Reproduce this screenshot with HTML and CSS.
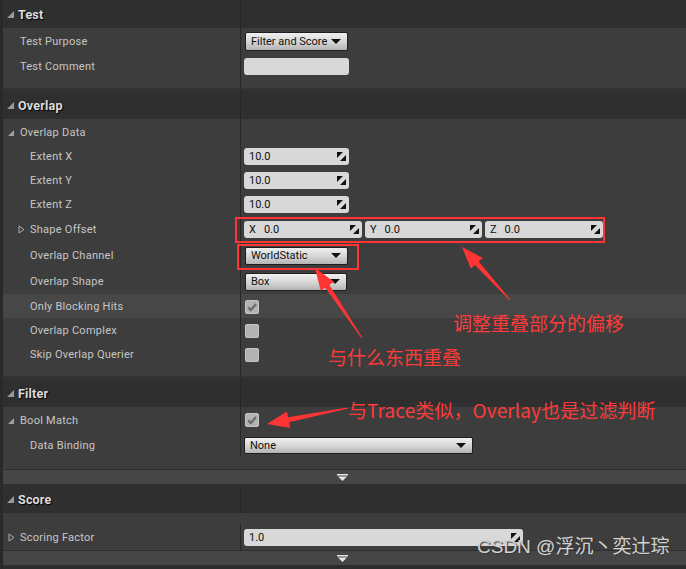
FILE: index.html
```html
<!DOCTYPE html>
<html>
<head>
<meta charset="utf-8">
<link rel="stylesheet" href="styles.css">
</head>
<body>
<div class="panel">
  <!-- TEST -->
  <div class="header"><div class="hname"><svg class="tri" width="7" height="7" viewBox="0 0 7 7"><polygon points="0,7 7,7 7,0"/></svg>Test</div><div class="hval"></div></div>
  <div class="rows">
    <div class="row h25"><div class="name l1">Test Purpose</div><div class="value"><div class="combo w103">Filter and Score<span class="arr"></span></div></div></div>
    <div class="row h25"><div class="name l1">Test Comment</div><div class="value"><div class="field w105"></div></div></div>
    <div class="row h10"><div class="name"></div><div class="value"></div></div>
  </div>
  <div class="sep"></div>

  <!-- OVERLAP -->
  <div class="header"><div class="hname"><svg class="tri" width="7" height="7" viewBox="0 0 7 7"><polygon points="0,7 7,7 7,0"/></svg>Overlap</div><div class="hval"></div></div>
  <div class="rows">
    <div class="row h25"><div class="name l0"><svg class="tri small" width="6" height="6" viewBox="0 0 6 6"><polygon points="0,6 6,6 6,0"/></svg>Overlap Data</div><div class="value"></div></div>
    <div class="row"><div class="name l2">Extent X</div><div class="value"><div class="field num w105"><span>10.0</span><svg class="sp" width="9" height="9" viewBox="0 0 9 9"><polygon points="0,0 6,0 0,6"/><polygon points="9,3 9,9 3,9"/></svg></div></div></div>
    <div class="row"><div class="name l2">Extent Y</div><div class="value"><div class="field num w105"><span>10.0</span><svg class="sp" width="9" height="9" viewBox="0 0 9 9"><polygon points="0,0 6,0 0,6"/><polygon points="9,3 9,9 3,9"/></svg></div></div></div>
    <div class="row"><div class="name l2">Extent Z</div><div class="value"><div class="field num w105"><span>10.0</span><svg class="sp" width="9" height="9" viewBox="0 0 9 9"><polygon points="0,0 6,0 0,6"/><polygon points="9,3 9,9 3,9"/></svg></div></div></div>
    <div class="row h26"><div class="name l1b"><svg class="otri" width="7" height="9" viewBox="0 0 7 9"><polygon points="1,1 6,4.5 1,8" /></svg>Shape Offset</div><div class="value vec">
      <div class="field num w118"><span><b class="ax">X</b>0.0</span><svg class="sp" width="9" height="9" viewBox="0 0 9 9"><polygon points="0,0 6,0 0,6"/><polygon points="9,3 9,9 3,9"/></svg></div>
      <div class="field num w117"><span><b class="ax">Y</b>0.0</span><svg class="sp" width="9" height="9" viewBox="0 0 9 9"><polygon points="0,0 6,0 0,6"/><polygon points="9,3 9,9 3,9"/></svg></div>
      <div class="field num w118"><span><b class="ax">Z</b>0.0</span><svg class="sp" width="9" height="9" viewBox="0 0 9 9"><polygon points="0,0 6,0 0,6"/><polygon points="9,3 9,9 3,9"/></svg></div>
    </div></div>
    <div class="row h26"><div class="name l2">Overlap Channel</div><div class="value"><div class="combo w103 h18">WorldStatic<span class="arr"></span></div></div></div>
    <div class="row h26"><div class="name l2">Overlap Shape</div><div class="value"><div class="combo w102 h18">Box<span class="arr"></span></div></div></div>
    <div class="row hl"><div class="name l2">Only Blocking Hits</div><div class="value"><div class="check"><svg width="14" height="14" viewBox="0 0 14 14"><path d="M3.2 7.4 L5.8 10 L11 4" fill="none" stroke="#6c6c6c" stroke-width="2.4"/></svg></div></div></div>
    <div class="row"><div class="name l2">Overlap Complex</div><div class="value"><div class="check"></div></div></div>
    <div class="row"><div class="name l2">Skip Overlap Querier</div><div class="value"><div class="check"></div></div></div>
    <div class="row h10"><div class="name"></div><div class="value"></div></div>
  </div>
  <div class="sep"></div>

  <!-- FILTER -->
  <div class="header"><div class="hname"><svg class="tri" width="7" height="7" viewBox="0 0 7 7"><polygon points="0,7 7,7 7,0"/></svg>Filter</div><div class="hval"></div></div>
  <div class="rows">
    <div class="row h25"><div class="name l0"><svg class="tri small" width="6" height="6" viewBox="0 0 6 6"><polygon points="0,6 6,6 6,0"/></svg>Bool Match</div><div class="value"><div class="check"><svg width="14" height="14" viewBox="0 0 14 14"><path d="M3.2 7.4 L5.8 10 L11 4" fill="none" stroke="#6c6c6c" stroke-width="2.4"/></svg></div></div></div>
    <div class="row h25"><div class="name l2">Data Binding</div><div class="value"><div class="combo w229 h17">None<span class="arr"></span></div></div></div>
    <div class="pad12"></div>
  </div>
  <div class="expander"><svg width="11" height="7" viewBox="0 0 11 7"><rect x="0" y="0" width="11" height="1.5"/><polygon points="1,2.5 10,2.5 5.5,7"/></svg></div>

  <!-- SCORE -->
  <div class="header"><div class="hname"><svg class="tri" width="7" height="7" viewBox="0 0 7 7"><polygon points="0,7 7,7 7,0"/></svg>Score</div><div class="hval"></div></div>
  <div class="rows">
    <div class="pad11"></div>
    <div class="row h26"><div class="name l0b"><svg class="otri" width="7" height="9" viewBox="0 0 7 9"><polygon points="1,1 6,4.5 1,8" /></svg>Scoring Factor</div><div class="value"><div class="field num w279"><span>1.0</span><svg class="sp" width="9" height="9" viewBox="0 0 9 9"><polygon points="0,0 6,0 0,6"/><polygon points="9,3 9,9 3,9"/></svg></div></div></div>
  </div>
  <div class="expander"><svg width="11" height="7" viewBox="0 0 11 7"><rect x="0" y="0" width="11" height="1.5"/><polygon points="1,2.5 10,2.5 5.5,7"/></svg></div>
  <div class="bottom"></div>
</div>

<!-- annotations overlay -->
<div class="box box1"></div>
<div class="box box2"></div>
<svg class="arrows" width="686" height="569" viewBox="0 0 686 569">
  <polygon points="510.4,299.7 478.7,261.6 482.7,257.9 462,247 470.9,268.7 474.9,265.0 509.6,300.3"/>
  <polygon points="362.4,337.7 329.4,284.9 333.9,281.8 315,268 320.7,290.8 325.2,287.7 361.6,338.3"/>
  <polygon points="348.2,408.6 289.1,422.2 290.2,428 267,424 287.0,411.5 288.1,417.3 347.8,407.4"/>
</svg>
<div class="note note1">调整重叠部分的偏移</div>
<div class="note note2">与什么东西重叠</div>
<div class="note note3">与Trace类似，Overlay也是过滤判断</div>
<div class="watermark">CSDN @浮沉丶奕辻琮</div>
</body>
</html>
```

FILE: styles.css
```css
html, body {
  margin: 0;
  padding: 0;
  width: 686px;
  height: 569px;
  overflow: hidden;
  background: #2c2c2c;
}
body {
  position: relative;
  font-family: Roboto, "Noto Sans", sans-serif;
}
.panel {
  display: flex;
  flex-direction: column;
  border-left: 3px solid #2a2a2a;
  height: 569px;
  box-sizing: border-box;
  background: #3d3d3d;
}
.header {
  display: grid;
  grid-template-columns: 238px 1fr;
  height: 28px;
  background: #2f2f2f;
  flex: none;
}
.hname {
  border-right: 1px solid #252525;
  display: flex;
  align-items: center;
  padding-left: 4px;
  font-size: 12.5px;
  font-weight: bold;
  color: #dcdcdc;
  text-shadow: 1px 1px 1px #000;
  letter-spacing: 0.2px;
}
.tri {
  fill: #9a9a9a;
  margin-right: 4px;
  margin-top: 1px;
}
.tri.small {
  fill: #a0a0a0;
  margin-right: 6px;
}
.otri {
  fill: none;
  stroke: #b0b0b0;
  stroke-width: 1;
  margin-right: 5px;
}
.rows {
  display: flex;
  flex-direction: column;
  background: #3d3d3d;
}
.row {
  display: grid;
  grid-template-columns: 238px 1fr;
  height: 24px;
}
.row.h25 { height: 25px; }
.row.h26 { height: 26px; }
.row.h10 { height: 10px; }
.row.hl { background: #474747; }
.name {
  border-right: 1px solid #262626;
  display: flex;
  align-items: center;
  padding-top: 1px;
  box-sizing: border-box;
  font-size: 11px;
  color: #c6c6c6;
  letter-spacing: 0.25px;
  white-space: nowrap;
}
.name.l0 { padding-left: 5px; }
.name.l0b { padding-left: 5px; }
.name.l1 { padding-left: 17px; }
.name.l1b { padding-left: 15px; }
.name.l2 { padding-left: 27px; }
.value {
  display: flex;
  align-items: center;
  padding-left: 3px;
  padding-top: 1px;
  box-sizing: border-box;
}
.value.vec { gap: 3px; }
.sep {
  height: 3px;
  background: #333333;
  flex: none;
}
.pad12 { height: 12px; }
.pad11 { height: 11px; }
.field {
  height: 17px;
  background: #d8d8d8;
  border-radius: 3px;
  box-sizing: border-box;
  display: flex;
  align-items: center;
  justify-content: space-between;
  padding: 0 3px 0 5px;
  font-size: 11px;
  color: #111;
}
.field .sp { fill: #111; }
.ax {
  font-weight: normal;
  margin-right: 8px;
}
.w105 { width: 105px; }
.w117 { width: 117px; }
.w118 { width: 118px; }
.w279 { width: 279px; }
.combo {
  height: 19px;
  box-sizing: border-box;
  border: 1px solid #1e1e1e;
  border-radius: 2px;
  background: linear-gradient(#f0f0f0, #d4d4d4 55%, #b4b4b4);
  display: flex;
  align-items: center;
  justify-content: space-between;
  padding: 0 6px 0 5px;
  font-size: 11px;
  color: #111;
  margin-left: 1px;
}
.combo.h18 { height: 18px; }
.combo.h17 { height: 17px; margin-left: 0; }
.w103 { width: 103px; }
.w102 { width: 102px; }
.w229 { width: 229px; }
.arr {
  width: 0;
  height: 0;
  border-left: 5px solid transparent;
  border-right: 5px solid transparent;
  border-top: 5px solid #111;
}
.check {
  width: 14px;
  height: 14px;
  margin-left: 1px;
  background: #b3b3b3;
  border-radius: 2px;
  box-sizing: border-box;
  border: 1px solid #c4c4c4;
  display: flex;
}
.check svg { margin: -1px; }
.expander {
  height: 14px;
  background: #464646;
  border-top: 1px solid #2e2e2e;
  border-bottom: 1px solid #2e2e2e;
  display: flex;
  justify-content: center;
  align-items: center;
  flex: none;
}
.expander svg {
  fill: #e6e6e6;
  margin-left: -5px;
}
.bottom {
  flex: 1;
  background: #2c2c2c;
}
/* annotation overlay */
.box {
  position: absolute;
  border: 2px solid #ff3434;
  box-sizing: border-box;
}
.box1 { left: 235px; top: 217px; width: 370px; height: 26px; }
.box2 { left: 237px; top: 244px; width: 122px; height: 26px; }
.arrows {
  position: absolute;
  left: 0;
  top: 0;
  fill: #ff3434;
}
.note {
  position: absolute;
  color: #ff3a3a;
  font-family: "Noto Sans CJK SC", "Noto Sans", sans-serif;
  font-size: 19px;
  line-height: 1;
  white-space: nowrap;
}
.note1 { left: 453px; top: 313px; }
.note2 { left: 328px; top: 347px; }
.note3 { left: 348px; top: 400px; letter-spacing: 0.1px; }
.watermark {
  position: absolute;
  left: 477px;
  top: 537px;
  font-family: "Liberation Sans", "Noto Sans CJK SC", sans-serif;
  font-size: 19px;
  line-height: 1.1;
  color: #d2d2d2;
  text-shadow: 1px 1px 1px #3a3a3a;
  white-space: nowrap;
}
```
